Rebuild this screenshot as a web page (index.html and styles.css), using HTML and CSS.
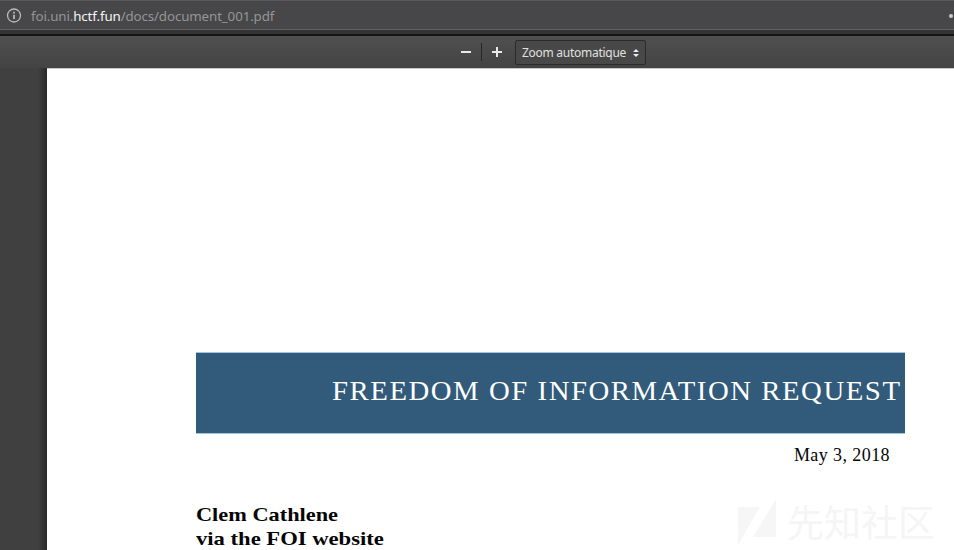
FILE: index.html
```html
<!DOCTYPE html>
<html lang="fr">
<head>
<meta charset="utf-8">
<title>document_001.pdf</title>
<link rel="stylesheet" href="styles.css">
</head>
<body>
<header class="urlbar">
  <svg class="info" viewBox="0 0 16 16" width="16" height="16"><circle cx="8" cy="7.5" r="6.5"/><path d="M8 6.7v4.2M8 3.8v1.6"/></svg>
  <div class="url">foi.uni.<span class="domain">hctf.fun</span>/docs/document_001.pdf</div>
  <span class="more"></span>
</header>
<div class="toolbar">
  <svg class="tool" viewBox="0 0 12 12" width="12" height="12"><path d="M1 6h10"/></svg>
  <span class="separator"></span>
  <svg class="tool" viewBox="0 0 12 12" width="12" height="12"><path d="M1 6h10M6 1v10"/></svg>
  <div class="select"><span class="label">Zoom automatique</span><svg viewBox="0 0 6 8" width="6" height="8"><path d="M3 0l3 3H0zM3 8l3-3H0z"/></svg></div>
</div>
<main class="viewer">
  <article class="page">
    <h1 class="banner"><span class="title">FREEDOM OF INFORMATION REQUEST</span></h1>
    <div class="date">May 3, 2018</div>
    <div class="sender"><span class="name">Clem Cathlene</span><br><span class="via">via the FOI website</span></div>
  </article>
</main>
<div class="watermark">
  <svg viewBox="0 0 38 46" width="38" height="46"><path d="M0 8h22L0 46zM38 0v38H15z"/></svg>
  <span>先知社区</span>
</div>
</body>
</html>
```

FILE: styles.css
```css
* { box-sizing: border-box; }
body {
  margin: 0;
  height: 550px;
  overflow: hidden;
  display: flex;
  flex-direction: column;
  background: #404040;
}
.urlbar {
  flex: none;
  height: 36px;
  display: flex;
  align-items: center;
  padding: 0 0 4px 6px;
  background: linear-gradient(#58595b 0 1px, #474749 1px 29px, #606163 29px 30px, #343436 30px 34px, #151515 34px);
}
.info { fill: none; stroke: #b9b9ba; stroke-width: 1.3; }
.info path { stroke-width: 1.8; }
.url {
  margin-left: 9px;
  font: 13.33px/20px "Noto Sans", sans-serif;
  letter-spacing: -.12px;
  color: #959596;
  white-space: nowrap;
}
.domain { color: #f4f4f4; }
.more {
  width: 4px;
  height: 4px;
  margin-left: auto;
  margin-right: 1px;
  border-radius: 50%;
  background: #c8c8c8;
}
.toolbar {
  flex: none;
  height: 32px;
  display: flex;
  align-items: center;
  padding-left: 460px;
  background: linear-gradient(#505050, #434343);
}
.tool { fill: none; stroke: #e9e9e9; stroke-width: 2; }
.separator {
  width: 1px;
  height: 18px;
  margin: 0 9px;
  background: #272727;
}
.select {
  width: 131px;
  height: 25px;
  margin-left: 12px;
  padding: 1px 6px 0;
  display: flex;
  align-items: center;
  justify-content: space-between;
  border: 1px solid #2b2b2b;
  border-radius: 2px;
  background: #484848;
  color: #e0e0e0;
  font: 12px/18px "Noto Sans", sans-serif;
  white-space: nowrap;
}
.label { letter-spacing: -.27px; }
.select svg { fill: #ededed; }
.viewer {
  flex: 1;
  min-height: 0;
  padding-left: 47px;
  background: linear-gradient(90deg, #404040 0 38px, #292929 47px);
}
.page {
  height: 100%;
  padding: 283px 49px 0 149px;
  background: #fff;
  border-top: 1px solid #c9c9c9;
  color: #050505;
  font-family: "Century Schoolbook", "Liberation Serif", serif;
}
.banner {
  height: 82px;
  margin: 0;
  padding: 0 5px 5px 0;
  display: flex;
  align-items: center;
  justify-content: flex-end;
  background: #315a7b;
  border: solid #a0c5df;
  border-width: 1px 0;
  color: #fff;
  font-size: 28px;
  font-weight: 400;
  white-space: nowrap;
}
.title {
  letter-spacing: 1.5px;
  margin-right: -1.5px;
  transform: scaleX(1.027);
  transform-origin: right;
}
.date {
  padding: 9px 15px 0 0;
  font-size: 18px;
  line-height: 24px;
  letter-spacing: .42px;
  text-align: right;
}
.sender {
  margin-top: 36px;
  font-size: 19.5px;
  font-weight: 700;
  line-height: 24px;
}
.name, .via {
  display: inline-block;
  transform: scaleX(1.145);
  transform-origin: left;
}
.via { transform: scaleX(1.16); }
.watermark {
  position: absolute;
  left: 738px;
  top: 499px;
  display: flex;
  gap: 11px;
  color: #f5f5f5;
  font: 37px/44px "Noto Sans CJK SC", sans-serif;
}
.watermark svg { fill: #f6f6f6; }
```
